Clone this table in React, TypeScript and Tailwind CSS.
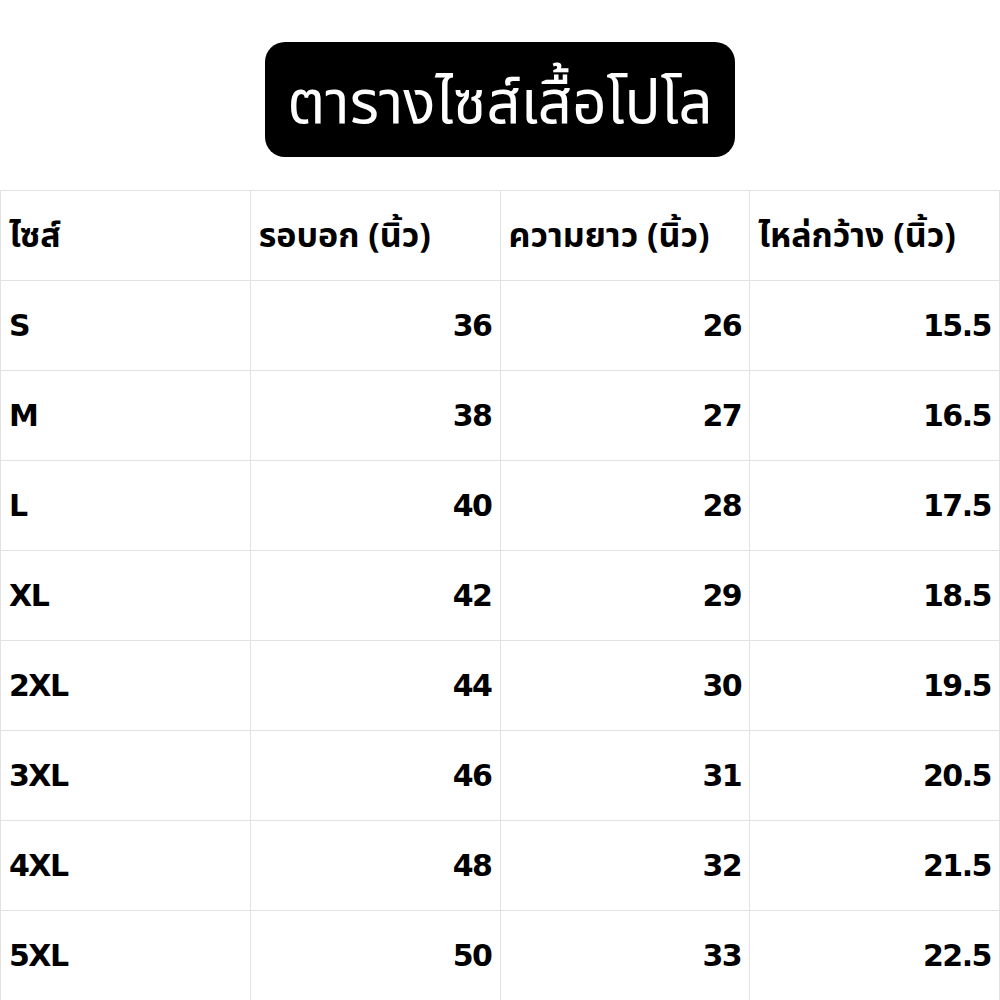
const headers = ["ไซส์", "รอบอก (นิ้ว)", "ความยาว (นิ้ว)", "ไหล่กว้าง (นิ้ว)"];

const rows: [string, string, string, string][] = [
  ["S", "36", "26", "15.5"],
  ["M", "38", "27", "16.5"],
  ["L", "40", "28", "17.5"],
  ["XL", "42", "29", "18.5"],
  ["2XL", "44", "30", "19.5"],
  ["3XL", "46", "31", "20.5"],
  ["4XL", "48", "32", "21.5"],
  ["5XL", "50", "33", "22.5"],
];

export default function App() {
  return (
    <div
      className="w-[1000px] h-[1000px] bg-white text-black overflow-hidden"
      style={{ fontFamily: '"Noto Sans", "Noto Sans Thai", sans-serif' }}
    >
      <div className="flex justify-center pt-[42px] pb-[33px]">
        <div className="w-[470px] h-[115px] bg-black rounded-[20px] flex items-center justify-center">
          <span className="text-white text-[60px] leading-none">ตารางไซส์เสื้อโปโล</span>
        </div>
      </div>

      <div className="grid grid-cols-4 border-t border-l border-[#e2e2e2]">
        {headers.map((h) => (
          <div
            key={h}
            className="h-[90px] flex items-center px-[8px] pb-[4px] border-r border-b border-[#e2e2e2] text-[34px] font-bold leading-none"
          >
            {h}
          </div>
        ))}
        {rows.map((r) =>
          r.map((c, i) => (
            <div
              key={r[0] + i}
              className={
                "h-[90px] flex items-center px-[8px] border-r border-b border-[#e2e2e2] text-[30px] font-bold tracking-[-1.5px] " +
                (i === 0 ? "justify-start" : "justify-end")
              }
              style={{ fontFamily: '"DejaVu Sans", sans-serif' }}
            >
              {c}
            </div>
          ))
        )}
      </div>
    </div>
  );
}
